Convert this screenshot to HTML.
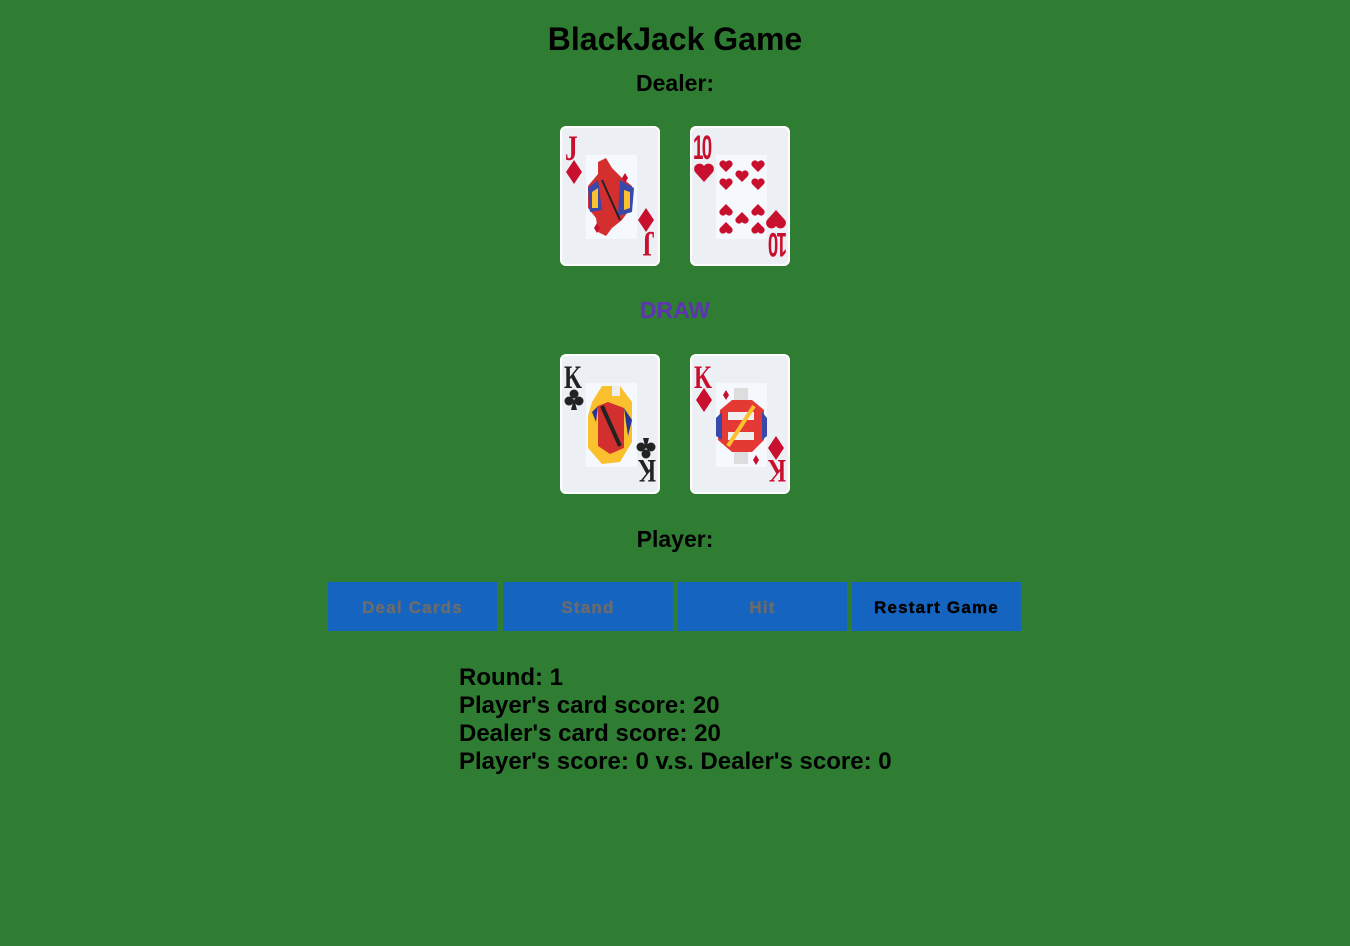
<!DOCTYPE html>
<html><head><meta charset="utf-8"><style>
body{margin:0;background:#2e7d32;font-family:"Liberation Sans",sans-serif;width:1350px;height:946px;overflow:hidden;position:relative}
.t{position:absolute;left:0;width:1350px;text-align:center;font-weight:bold;color:#000}
.card{position:absolute;width:96px;height:136px;background:#ecf0f5;border:2px solid #fff;border-radius:6px;overflow:hidden}
.card svg{position:absolute;left:0;top:0}
.btn{position:absolute;top:582px;height:49px;background:#1565c0;font-weight:bold;font-size:17px;letter-spacing:1.2px;display:flex;align-items:center;justify-content:center;color:#6b6b6b;padding-top:2px;box-sizing:border-box;-webkit-text-stroke:0.4px currentColor}
.info{position:absolute;left:459px;top:664px;font-weight:bold;font-size:24px;line-height:28px}
</style></head><body>
<div class="t" style="top:21px;font-size:32px">BlackJack Game</div>
<div class="t" style="top:70px;font-size:23px">Dealer:</div>
<div class="t" style="top:297px;font-size:23px;color:#5e35b1">DRAW</div>
<div class="t" style="top:526px;font-size:23px">Player:</div>

<div class="card" style="left:560px;top:126px"><svg width="96" height="136">
<g fill="#c8102e"><text x="0" y="0" font-size="36" font-family="Liberation Serif" font-weight="bold" transform="translate(3 32) scale(0.7 1)">J</text>
<path d="M12 32 L20 44 L12 56 L4 44Z"/></g>
<rect x="24" y="27" width="51" height="84" fill="#f5f9fd"/>
<path d="M36 34 L44 30 L50 40 L60 50 L70 58 L70 78 L60 92 L50 100 L44 108 L36 104 L34 90 L26 80 L26 58 L36 46Z" fill="#d32f2f"/>
<path d="M26 60 L36 52 L40 82 L28 84Z M58 52 L72 60 L70 84 L56 88Z" fill="#3949ab"/>
<path d="M30 64 L36 60 L36 80 L30 80Z M62 62 L68 64 L68 80 L62 82Z" fill="#fbc02d"/>
<path d="M40 52 L58 92" stroke="#222" stroke-width="2"/>
<path d="M63 45 l3 5 -3 5 -3 -5z M35 95 l3 5 -3 5 -3 -5z" fill="#c8102e"/>
<g fill="#c8102e" transform="rotate(180 48 68)"><text x="0" y="0" font-size="36" font-family="Liberation Serif" font-weight="bold" transform="translate(3 32) scale(0.7 1)">J</text>
<path d="M12 32 L20 44 L12 56 L4 44Z"/></g>
</svg></div>

<div class="card" style="left:690px;top:126px"><svg width="96" height="136">
<g fill="#c8102e"><text x="0" y="0" font-size="34" font-family="Liberation Sans" font-weight="bold" letter-spacing="-3" transform="translate(1 31) scale(0.55 1)">10</text>
<path d="M12 54 L3 44 A5 5 0 0 1 12 38 A5 5 0 0 1 21 44Z"/></g>
<rect x="24" y="27" width="51" height="84" fill="#f5f9fd"/>
<g fill="#c8102e">
<path d="M34 44 l-6-6 a3.5 3.5 0 0 1 6-4 a3.5 3.5 0 0 1 6 4z"/><path d="M66 44 l-6-6 a3.5 3.5 0 0 1 6-4 a3.5 3.5 0 0 1 6 4z"/>
<path d="M50 54 l-6-6 a3.5 3.5 0 0 1 6-4 a3.5 3.5 0 0 1 6 4z"/>
<path d="M34 62 l-6-6 a3.5 3.5 0 0 1 6-4 a3.5 3.5 0 0 1 6 4z"/><path d="M66 62 l-6-6 a3.5 3.5 0 0 1 6-4 a3.5 3.5 0 0 1 6 4z"/>
<path d="M34 76 l-6 6 a3.5 3.5 0 0 0 6 4 a3.5 3.5 0 0 0 6-4z"/><path d="M66 76 l-6 6 a3.5 3.5 0 0 0 6 4 a3.5 3.5 0 0 0 6-4z"/>
<path d="M50 84 l-6 6 a3.5 3.5 0 0 0 6 4 a3.5 3.5 0 0 0 6-4z"/>
<path d="M34 94 l-6 6 a3.5 3.5 0 0 0 6 4 a3.5 3.5 0 0 0 6-4z"/><path d="M66 94 l-6 6 a3.5 3.5 0 0 0 6 4 a3.5 3.5 0 0 0 6-4z"/>
</g>
<g fill="#c8102e" transform="rotate(180 48 68)"><text x="0" y="0" font-size="34" font-family="Liberation Sans" font-weight="bold" letter-spacing="-3" transform="translate(1 31) scale(0.55 1)">10</text>
<path d="M12 54 L3 44 A5 5 0 0 1 12 38 A5 5 0 0 1 21 44Z"/></g>
</svg></div>

<div class="card" style="left:560px;top:354px"><svg width="96" height="136">
<g fill="#222"><text x="0" y="0" font-size="33" font-family="Liberation Serif" font-weight="bold" transform="translate(2 32) scale(0.7 1)">K</text>
<circle cx="12" cy="38" r="4.5"/><circle cx="7" cy="45" r="4.5"/><circle cx="17" cy="45" r="4.5"/><path d="M12 42 L9 54 L15 54Z"/></g>
<rect x="24" y="27" width="51" height="84" fill="#f5f9fd"/>
<path d="M30 46 L40 30 L58 30 L70 46 L70 86 L58 106 L40 108 L26 92 L26 60Z" fill="#fbc02d"/>
<path d="M36 50 L46 46 L62 52 L62 92 L48 98 L36 90Z" fill="#d32f2f"/>
<path d="M36 50 L30 56 L34 66Z M62 52 L70 64 L66 80Z" fill="#283593"/>
<path d="M40 50 L58 90" stroke="#222" stroke-width="4"/>
<path d="M50 30 L58 30 L58 40 L50 40Z" fill="#eee"/>
<g fill="#222" transform="rotate(180 48 68)"><text x="0" y="0" font-size="33" font-family="Liberation Serif" font-weight="bold" transform="translate(2 32) scale(0.7 1)">K</text>
<circle cx="12" cy="38" r="4.5"/><circle cx="7" cy="45" r="4.5"/><circle cx="17" cy="45" r="4.5"/><path d="M12 42 L9 54 L15 54Z"/></g>
</svg></div>

<div class="card" style="left:690px;top:354px"><svg width="96" height="136">
<g fill="#c8102e"><text x="0" y="0" font-size="33" font-family="Liberation Serif" font-weight="bold" transform="translate(2 32) scale(0.7 1)">K</text>
<path d="M12 32 L20 44 L12 56 L4 44Z"/></g>
<rect x="24" y="27" width="51" height="84" fill="#f5f9fd"/>
<path d="M28 54 L40 44 L60 44 L72 54 L72 84 L60 96 L40 96 L26 84Z" fill="#e53935"/>
<path d="M24 62 L30 56 L30 84 L24 80Z M70 56 L75 62 L75 80 L70 84Z" fill="#3949ab"/>
<path d="M36 56 L62 56 L62 64 L36 64Z M36 76 L62 76 L62 84 L36 84Z" fill="#f0f0f0"/>
<path d="M36 90 L62 50" stroke="#fbc02d" stroke-width="4"/>
<path d="M42 32 L56 32 L56 44 L42 44Z M42 96 L56 96 L56 108 L42 108Z" fill="#ddd"/>
<path d="M20 14 l3 5 -3 5 -3 -5z" transform="translate(14 20)" fill="#c8102e"/>
<path d="M20 14 l3 5 -3 5 -3 -5z" transform="translate(44 85)" fill="#c8102e"/>
<g fill="#c8102e" transform="rotate(180 48 68)"><text x="0" y="0" font-size="33" font-family="Liberation Serif" font-weight="bold" transform="translate(2 32) scale(0.7 1)">K</text>
<path d="M12 32 L20 44 L12 56 L4 44Z"/></g>
</svg></div>

<div class="btn" style="left:328px;width:169px">Deal Cards</div>
<div class="btn" style="left:503px;width:170px">Stand</div>
<div class="btn" style="left:678px;width:169px">Hit</div>
<div class="btn" style="left:852px;width:169px;color:#000">Restart Game</div>

<div class="info">Round: 1<br>Player's card score: 20<br>Dealer's card score: 20<br>Player's score: 0 v.s. Dealer's score: 0</div>
</body></html>
